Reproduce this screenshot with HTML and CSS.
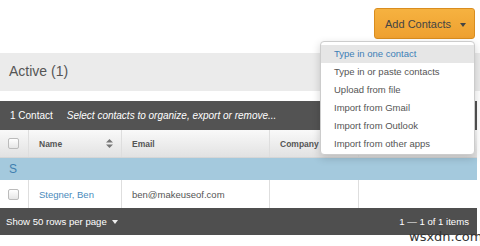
FILE: index.html
```html
<!DOCTYPE html>
<html lang="en">
  <head>
    <meta charset="UTF-8" />
    <title>Contacts</title>
    <link rel="stylesheet" href="styles.css">
  </head>
  <body>
    <div class="page">
      <div class="topbar">
        <div class="add-wrap">
          <button class="add-button">Add Contacts <span class="caret"></span></button>
          <ul class="menu">
            <li class="active">Type in one contact</li>
            <li>Type in or paste contacts</li>
            <li>Upload from file</li>
            <li>Import from Gmail</li>
            <li>Import from Outlook</li>
            <li>Import from other apps</li>
          </ul>
        </div>
      </div>

      <div class="section-title">Active (1)</div>

      <div class="grid">
        <div class="toolbar">
          <span class="count">1 Contact</span>
          <span class="hint">Select contacts to organize, export or remove...</span>
        </div>

        <div class="row head">
          <div class="cell check"><span class="box"></span></div>
          <div class="cell name">Name
            <svg class="sort" width="7" height="9" viewBox="0 0 7 9"><path d="M3.5 0 L7 3.5 H0 Z M3.5 9 L0 5.5 H7 Z" fill="#777"/></svg>
          </div>
          <div class="cell email">Email</div>
          <div class="cell company">Company</div>
          <div class="cell extra"></div>
        </div>

        <div class="group">S</div>

        <div class="row data">
          <div class="cell check"><span class="box"></span></div>
          <div class="cell name"><a href="#">Stegner, Ben</a></div>
          <div class="cell email">ben@makeuseof.com</div>
          <div class="cell company"></div>
          <div class="cell extra"></div>
        </div>

        <div class="footer">
          <span>Show 50 rows per page <span class="caret light"></span></span>
          <span class="items">1 &mdash; 1 of 1 items</span>
        </div>
      </div>

      <div class="watermark">wsxdn.com</div>
    </div>
  </body>
</html>
```

FILE: styles.css
```css
body {
  margin: 0;
  font-family: "Liberation Sans", Arial, sans-serif;
  color: #555;
  background: #fff;
}
.page {
  position: relative;
  width: 480px;
  height: 246px;
  overflow: hidden;
}
.topbar {
  height: 53px;
  display: flex;
  justify-content: flex-end;
  align-items: flex-start;
  padding-right: 5px;
}
.add-wrap {
  position: relative;
  margin-top: 8px;
}
.add-button {
  width: 101px;
  height: 31px;
  padding: 0 0 0 10px;
  border: 1px solid #d98d1f;
  border-radius: 3px;
  background: linear-gradient(#f6b240, #eea030);
  color: #444;
  font-family: inherit;
  font-size: 11px;
  text-align: left;
  white-space: nowrap;
}
.caret {
  display: inline-block;
  width: 0;
  height: 0;
  margin-left: 6px;
  vertical-align: middle;
  border-left: 3.5px solid transparent;
  border-right: 3.5px solid transparent;
  border-top: 4px solid #444;
}
.caret.light {
  border-top-color: #eee;
  margin-left: 3px;
}
.menu {
  position: absolute;
  top: 33px;
  right: 0;
  width: 153px;
  margin: 0;
  padding: 3px 0 1px;
  list-style: none;
  background: #fff;
  border: 1px solid #ccc;
  border-radius: 4px;
  box-shadow: 0 3px 8px rgba(0, 0, 0, 0.18);
  z-index: 2;
}
.menu li {
  height: 18px;
  line-height: 18px;
  padding-left: 13px;
  font-size: 9.5px;
  color: #555;
  white-space: nowrap;
}
.menu li.active {
  background: #e6e6e6;
  color: #3d7fb6;
}
.section-title {
  height: 38px;
  line-height: 36px;
  padding-left: 9px;
  background: #ebebeb;
  font-size: 14px;
  color: #555;
}
.grid {
  width: 477px;
  margin-top: 10px;
}
.toolbar {
  height: 29px;
  display: flex;
  align-items: center;
  gap: 14px;
  padding-left: 10px;
  background: #535353;
  color: #fff;
  font-size: 10px;
}
.hint {
  font-style: italic;
}
.row {
  display: flex;
  height: 28px;
}
.row.head {
  background: linear-gradient(#f9f9f9, #e2e2e2);
  border-bottom: 1px solid #d6d6d6;
  height: 27px;
  font-size: 8.5px;
  font-weight: bold;
  color: #555;
}
.cell {
  box-sizing: border-box;
  display: flex;
  align-items: center;
  border-right: 1px solid #dedede;
  padding-left: 10px;
}
.cell.check {
  width: 29px;
  padding-left: 8px;
}
.cell.name {
  width: 93px;
  justify-content: space-between;
}
.cell.email {
  width: 148px;
}
.cell.company {
  width: 89px;
}
.cell.extra {
  flex: 1;
  border-right: none;
}
.sort {
  margin-right: 8px;
}
.box {
  width: 9px;
  height: 9px;
  border: 1px solid #bbb;
  border-radius: 2px;
  background: linear-gradient(#fff, #e6e6e6);
}
.group {
  height: 22px;
  line-height: 22px;
  padding-left: 9px;
  background: #a4c9dd;
  color: #3f7fb0;
  font-size: 12px;
}
.row.data {
  font-size: 9.5px;
  color: #555;
}
.row.data .name a {
  color: #4a8abb;
  text-decoration: none;
}
.footer {
  height: 27px;
  display: flex;
  align-items: center;
  justify-content: space-between;
  padding: 0 8px 0 6px;
  background: #4f4f4f;
  color: #fff;
  font-size: 9.6px;
}
.watermark {
  position: absolute;
  left: 409px;
  top: 230px;
  line-height: 14px;
  font-family: "DejaVu Sans", sans-serif;
  font-size: 13px;
  color: #333;
}
```
